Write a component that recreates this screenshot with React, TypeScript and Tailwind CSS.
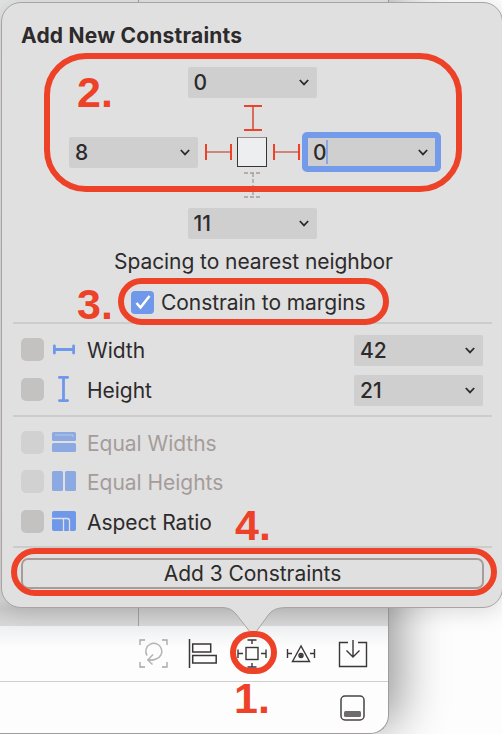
import type { ReactNode } from "react";

const RED = "#ed4228";
const BLUE = "#6f97ea";

function Chevron() {
  return (
    <svg width="10" height="7" viewBox="0 0 10 7" fill="none" stroke="#2d2a2b" strokeWidth="1.8">
      <path d="M0.8 1 L5 5.4 L9.2 1" />
    </svg>
  );
}

function Combo({ value }: { value: string }) {
  return (
    <div className="flex h-[31px] w-[129px] shrink-0 items-center justify-between rounded-[2px] bg-[#cfcfcf] pl-[6px] pr-[8px] text-[21px] leading-none font-medium">
      <span>{value}</span>
      <Chevron />
    </div>
  );
}

function HorizontalStrut() {
  return (
    <svg width="27" height="16" viewBox="0 0 27 16" fill="none" stroke={RED}>
      <path d="M1 0V16M26 0V16" strokeWidth="2" />
      <path d="M2 8H25" stroke="#c8695a" strokeWidth="1.5" />
    </svg>
  );
}

function VerticalStrut({ dashed = false }: { dashed?: boolean }) {
  return dashed ? (
    <svg width="18" height="26" viewBox="0 0 18 26" fill="none" stroke="#a49b99" strokeDasharray="4 2">
      <path d="M0 1H18M0 25H18M9 1V25" strokeWidth="1.3" />
    </svg>
  ) : (
    <svg width="18" height="26" viewBox="0 0 18 26" fill="none" stroke={RED}>
      <path d="M0 1H18M0 25H18" strokeWidth="2" />
      <path d="M9 2V24" stroke="#d8604e" strokeWidth="1.8" />
    </svg>
  );
}

function WidthIcon() {
  return (
    <svg width="24" height="26" viewBox="0 0 24 26" fill="none" stroke={BLUE} strokeWidth="2.8" strokeLinecap="round">
      <path d="M2.4 10V17M21.6 10V17M2.4 13.5H21.6" />
    </svg>
  );
}

function HeightIcon() {
  return (
    <svg width="24" height="28" viewBox="0 0 24 28" fill="none" stroke={BLUE} strokeWidth="2.8" strokeLinecap="round">
      <path d="M7.4 2.4H15.6M7.4 25.6H15.6M11.5 2.4V25.6" />
    </svg>
  );
}

function EqualWidthsIcon() {
  return (
    <svg width="24" height="20" viewBox="0 0 24 20" fill="#8da9e2">
      <rect width="24" height="9" rx="1.5" />
      <rect y="11" width="24" height="9" rx="1.5" />
      <path d="M3 3H21V5" fill="none" stroke="#b9c7e2" />
    </svg>
  );
}

function EqualHeightsIcon() {
  return (
    <svg width="24" height="20" viewBox="0 0 24 20" fill="#8da9e2">
      <rect width="11" height="20" rx="1.5" />
      <rect x="13" width="11" height="20" rx="1.5" />
    </svg>
  );
}

function AspectIcon() {
  return (
    <svg width="24" height="20" viewBox="0 0 24 20">
      <rect width="24" height="20" rx="2" fill={BLUE} />
      <path d="M0 7.5H15Q17.5 7.5 17.5 10V20M11.5 7.5V20" fill="none" stroke="#e0e0e0" strokeWidth="1.3" />
    </svg>
  );
}

function Box({ faint = false }: { faint?: boolean }) {
  return <span className={`size-[23px] shrink-0 rounded-[5px] ${faint ? "bg-[#d1d1d1]" : "bg-[#c4c1c1]"}`} />;
}

function OptionRow({ icon, label, value, className, faint = false }: {
  icon: ReactNode;
  label: ReactNode;
  value?: string;
  className: string;
  faint?: boolean;
}) {
  return (
    <div className={`flex items-center ${className}`}>
      <span className="-mt-[3px] flex items-center">
        <Box faint={faint} />
        <span className="ml-[8px] flex w-6 justify-center">{icon}</span>
      </span>
      <span className={`ml-[11px] flex-1 text-[21px] leading-none tracking-[-0.03px] ${faint ? "text-[#a59c9a]" : ""}`}>{label}</span>
      {value && <Combo value={value} />}
    </div>
  );
}

function Divider() {
  return <div className="mr-[10px] ml-[10px] h-[2px] w-[479px] shrink-0 bg-[#cccccc]" />;
}

function Toolbar() {
  const ink = "#3b3637";
  return (
    <div className="flex h-[55px] items-center pl-[139px]">
      <svg width="29" height="29" viewBox="0 0 29 29" fill="none" stroke="#aaa4a3" strokeWidth="1.3">
        <path d="M1 6V1H6M23 1H28V6M28 23V28H23M6 28H1V23" />
        <path d="M8 16.5A8 8 0 1 1 17 20Q13.5 21.5 9.5 21M14 15.5L8.8 21L13.5 25.5" stroke="#b6b2b1" strokeWidth="1.5" />
      </svg>
      <svg className="ml-[20px]" width="29" height="29" viewBox="0 0 29 29" fill="none" stroke={ink} strokeWidth="1.5">
        <path d="M1.5 0V29" />
        <rect x="4.7" y="5" width="18" height="8" />
        <rect x="4.7" y="16.5" width="23.5" height="7.5" />
      </svg>
      <svg className="ml-[20px]" width="30" height="29" viewBox="0 0 30 29" fill="none" stroke={ink} strokeWidth="1.4">
        <rect x="9" y="8.5" width="12" height="12" />
        <path d="M1 10.5V19M1 14.5H6M29 10.5V19M24 14.5H29M10.5 1H19.5M15 1V5M10.5 28H19.5M15 24V28" />
      </svg>
      <svg className="ml-[19px]" width="30" height="29" viewBox="0 0 30 29" fill="none" stroke={ink} strokeWidth="1.4">
        <path d="M1.5 10V19M1.5 14.5H6M28.5 10V19M24 14.5H28.5M15 7L6.5 22.5H23.5Z" />
        <circle cx="15" cy="16.5" r="2" />
        <circle cx="15" cy="16.5" r="0.8" fill={ink} />
      </svg>
      <svg className="ml-[22px]" width="30" height="29" viewBox="0 0 30 29" fill="none" stroke={ink} strokeWidth="1.4">
        <path d="M10 3.5H1.5V27.5H28.5V3.5H20M15 1V17.5M8.5 11.5L15 18L21.5 11.5" />
      </svg>
    </div>
  );
}

function EditorWindow() {
  return (
    <div className="flex h-[734px] w-[389px] flex-col rounded-br-[19px] border-r border-b border-[#a39b9a] bg-[#fdfdfd] shadow-[10px_-8px_48px_rgba(0,0,0,0.42)]">
      <div className="flex h-[626px] shrink-0 items-end bg-[linear-gradient(to_bottom,#e2e4e4_0,#d8d8d8_600px,#cbcbcb_608px,#d8d8d8_626px)]">
        <div className="h-[626px] w-[139px] border-r border-[#a69d9b]" />
      </div>
      <div className="h-[55px] bg-[linear-gradient(to_bottom,#eef0f1_0,#fdfdfd_22px)]">
        <Toolbar />
      </div>
      <div className="flex h-[52px] items-center justify-end border-t border-[#cfcfcf] pr-[23px]">
        <svg width="25" height="26" viewBox="0 0 25 26" fill="none" stroke="#484243" strokeWidth="1.5">
          <rect x="1" y="1" width="23" height="24" rx="4" />
          <rect x="4" y="16" width="17" height="6" rx="1.5" fill="#716b6c" stroke="none" />
        </svg>
      </div>
    </div>
  );
}

function Popover() {
  return (
    <div className="absolute top-[2px] left-[1px] flex h-[606px] w-[502px] flex-col rounded-[20px] border border-[#aaa3a2] bg-[#e0e0e0] pl-px shadow-[0_4px_22px_rgba(0,0,0,0.14)]">
      <h1 className="flex h-[64px] items-center pl-[18px] text-[21px] leading-none font-bold">
        <span className="tracking-[0.22px]">Add New Constraints</span>
      </h1>
      <div className="flex h-[172px] w-[498px] shrink-0 flex-col items-center">
        <Combo value="0" />
        <div className="mt-[7px] h-[26px] pl-px">
          <VerticalStrut />
        </div>
        <div className="flex h-[42px] items-center self-start pl-[66px]">
          <Combo value="8" />
          <div className="ml-[7px]">
            <HorizontalStrut />
          </div>
          <div className="ml-[5px] size-[30px] border-[1.5px] border-[#393435] border-t-[#958c8b] bg-[#eceeef]" />
          <div className="ml-[6px]">
            <HorizontalStrut />
          </div>
          <div className="ml-[2px] flex h-[40px] w-[139px] items-center justify-between rounded-[5px] border-[6px] border-[#749bea] bg-[#cfcfcf] pr-[7px] pl-[5px] text-[21px] leading-none font-medium">
            <span className="flex items-center">
              0<span className="-ml-px h-[24px] w-[2px] bg-[#86a6e8]" />
            </span>
            <Chevron />
          </div>
        </div>
        <div className="-mt-px h-[26px] pl-px">
          <VerticalStrut dashed />
        </div>
        <div className="mt-[10px]">
          <Combo value="11" />
        </div>
      </div>
      <p className="flex h-[44px] shrink-0 items-center pl-[111px] text-[21px] leading-none tracking-[-0.06px] whitespace-nowrap">
        Spacing to nearest neighbor
      </p>
      <div className="flex h-[39px] shrink-0 items-center pb-px pl-[128px] text-[21px] leading-none">
        <span className="flex size-[23px] items-center justify-center rounded-[4px] bg-[#6f97ea]">
          <svg width="16" height="16" viewBox="0 0 16 16" fill="none" stroke="white" strokeWidth="2.5">
            <path d="M1.5 9L5.5 13.5L14.5 2" />
          </svg>
        </span>
        <span className="ml-[7px] tracking-[-0.06px]">Constrain to margins</span>
      </div>
      <Divider />
      <div className="h-[91px] w-[498px] shrink-0 pr-[18px] pl-[18px] pt-[9px]">
        <OptionRow className="h-[35px]" icon={<WidthIcon />} label="Width" value="42" />
        <OptionRow className="mt-[5px] h-[35px]" icon={<HeightIcon />} label="Height" value="21" />
      </div>
      <Divider />
      <div className="h-[129px] shrink-0 px-[18px] pt-[14px]">
        <OptionRow className="h-[25px]" faint icon={<EqualWidthsIcon />} label="Equal Widths" />
        <OptionRow className="mt-[14px] h-[25px]" faint icon={<EqualHeightsIcon />} label="Equal Heights" />
        <OptionRow className="mt-[15px] h-[25px]" icon={<AspectIcon />} label="Aspect Ratio" />
      </div>
      <Divider />
      <button className="mt-[10px] ml-[18px] h-[31px] w-[463px] shrink-0 rounded-[7px] border-2 border-[#a69d9b] text-[21px] leading-none tracking-[-0.05px]">
        Add 3 Constraints
      </button>
      <svg className="absolute top-[603px] left-[220px]" width="64" height="30" viewBox="0 0 64 30">
        <path d="M0 0V1.5Q9 1.5 14 8L28 26Q31 29 34 26L47 8Q52 1.5 64 1.5V0Z" fill="#e0e0e0" />
        <path d="M0 1.5Q9 1.5 14 8L28 26Q31 29 34 26L47 8Q52 1.5 64 1.5" fill="none" stroke="#aaa3a2" />
      </svg>
    </div>
  );
}

function Annotations() {
  return (
    <div className="pointer-events-none absolute inset-0 font-['Liberation_Sans',sans-serif] text-[43px] leading-none font-bold text-[#ed4228]">
      <div className="absolute top-[53px] left-[44px] h-[139px] w-[418px] rounded-[42px] border-[6px] border-[#ed4228]" />
      <div className="absolute top-[278px] left-[118px] h-[47px] w-[271px] rounded-[24px] border-[6px] border-[#ed4228]" />
      <div className="absolute top-[548px] left-[11px] h-[48px] w-[486px] rounded-[24px] border-[6px] border-[#ed4228]" />
      <div className="absolute top-[631px] left-[230px] h-[43px] w-[47px] rounded-[22px] border-[6px] border-[#ed4228]" />
      <span className="absolute top-[71px] left-[77px]">2.</span>
      <span className="absolute top-[283px] left-[77px]">3.</span>
      <span className="absolute top-[504px] left-[235px]">4.</span>
      <span className="absolute top-[677px] left-[234px]">1.</span>
    </div>
  );
}

export default function App() {
  return (
    <main className="relative h-[734px] w-[502px] overflow-hidden bg-[#fdfdfd] font-['Inter',sans-serif] text-[#2d2a2b]">
      <EditorWindow />
      <Popover />
      <Annotations />
    </main>
  );
}
